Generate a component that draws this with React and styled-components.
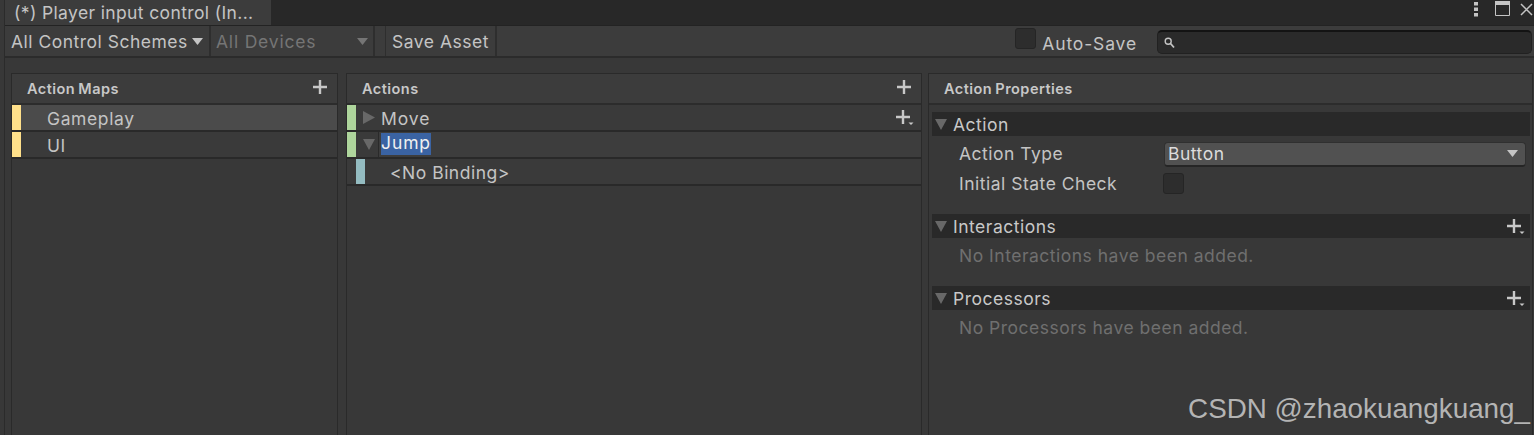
import React from "react";
import styled, { createGlobalStyle } from "styled-components";

const Global = createGlobalStyle`
  html, body { margin: 0; padding: 0; background: #383838; }
  body { font-family: Inter, "Noto Sans", sans-serif; }
  * { box-sizing: border-box; }
`;

const Page = styled.div`
  position: relative;
  width: 1534px;
  height: 435px;
  overflow: hidden;
  padding-left: 4px;
  background: #383838;
  color: #c4c4c4;
  font-size: 17.5px;
  letter-spacing: 0.5px;
  white-space: nowrap;
`;

const Frame = styled.div`
  height: 100%;
  border-left: 1px solid #2b2b2b;
`;

const TabBar = styled.div`
  display: flex;
  align-items: stretch;
  justify-content: space-between;
  height: 26px;
  background: #282828;
  border-bottom: 1px solid #232323;
`;

const Tab = styled.div`
  display: flex;
  align-items: center;
  width: 266px;
  padding-left: 9px;
  background: #3c3c3c;
  letter-spacing: 0.37px;
`;

const WindowIcons = styled.div`
  display: flex;
  align-items: flex-start;
  padding-top: 1px;
  padding-right: 1px;
`;

const Dots = styled.svg`
  margin: 1px 17px 0 0;
`;

const MaxIcon = styled.svg`
  margin-right: 10px;
`;

const CloseIcon = styled.svg`
  margin-top: 2px;
`;

const Toolbar = styled.div`
  display: flex;
  align-items: stretch;
  height: 32px;
  padding-left: 2px;
  background: #3c3c3c;
  border-bottom: 2px solid #2b2b2b;
`;

const ToolItem = styled.div`
  display: flex;
  align-items: center;
  justify-content: space-between;
  width: ${(p) => p.$w}px;
  padding: 0 ${(p) => p.$pr ?? 6}px 0 ${(p) => p.$pl ?? 4}px;
  margin-right: ${(p) => p.$mr ?? 1}px;
  border-right: 2px solid #2e2e2e;
  ${(p) => p.$bl && "border-left: 1px solid #2e2e2e;"}
  color: ${(p) => (p.$off ? "#757575" : "#c4c4c4")};
  ${(p) => p.$off && "letter-spacing: 0.8px;"}
`;

const AutoSave = styled.label`
  display: flex;
  align-items: center;
  gap: 6px;
  margin-left: auto;
  margin-right: 20px;
`;

const AutoSaveText = styled.span`
  padding-top: 4px;
  letter-spacing: 0.85px;
`;

const Check = styled.span`
  display: block;
  width: 21px;
  height: 21px;
  background: #2d2d2d;
  border: 1px solid #252525;
  border-radius: 3px;
  ${(p) => p.$up && "margin-top: -5px;"}
  ${(p) => p.$inset && "margin: 1px 0 0 -1px;"}
`;

const SearchBox = styled.div`
  display: flex;
  align-items: center;
  width: 375px;
  height: 24px;
  margin-top: 4px;
  margin-right: 2px;
  padding-left: 6px;
  background: #2a2a2a;
  border: 1px solid #212121;
  border-top: 2px solid #131313;
  border-radius: 5px;
`;

const Main = styled.div`
  display: grid;
  grid-template-columns: 327px 576px 1fr;
  column-gap: 8px;
  height: 377px;
  padding: 15px 1px 0 6px;
`;

const Panel = styled.section`
  display: flex;
  flex-direction: column;
  min-width: 0;
  border: 1px solid #2a2a2a;
  border-bottom: 0;
  ${(p) => p.$pull && "margin-left: -2px;"}
`;

const PanelHead = styled.header`
  display: flex;
  align-items: center;
  justify-content: space-between;
  flex: none;
  height: 31px;
  padding: 0 6px 0 15px;
  background: #3c3c3c;
  border-bottom: 2px solid #2c2c2c;
  color: #c8c8c8;
  font-size: 14.5px;
  font-weight: 600;
  letter-spacing: 0.47px;
  word-spacing: -1px;
`;

const HeadPlus = styled.span`
  display: flex;
  margin-top: -4px;
`;

const Row = styled.div`
  display: flex;
  align-items: center;
  flex: none;
  height: 27px;
  background: ${(p) => (p.$sel ? "#4b4b4b" : "#3a3a3a")};
  border-bottom: 2px solid #292929;
  padding-left: ${(p) => p.$indent ?? 0}px;
`;

const ColorBar = styled.span`
  flex: none;
  align-self: stretch;
  width: 9px;
  background: ${(p) => p.$c};
`;

const MapName = styled.span`
  margin: 2px 0 0 26px;
  letter-spacing: 0.6px;
`;

const Arrow = styled.svg`
  flex: none;
  width: 12px;
  height: 13px;
  margin-left: 7px;
  margin-right: 5px;
  fill: #686868;
`;

const ActionName = styled.span`
  margin: 2px 0 0 1px;
  letter-spacing: 0.9px;
`;

const JumpField = styled.div`
  display: flex;
  align-items: flex-start;
  flex: 1;
  align-self: stretch;
  margin-left: -2px;
  padding: 1px 0 0 2px;
  background: #3d3d3d;
  border-left: 1px solid #2a2a2a;
`;

const Selected = styled.span`
  height: 22px;
  line-height: 20px;
  background: #3a63a3;
  color: #f0f0f0;
  letter-spacing: 0.9px;
`;

const TrailingPlus = styled.span`
  display: flex;
  margin-left: auto;
  margin-right: ${(p) => p.$mr ?? 5}px;
  margin-top: ${(p) => p.$mt ?? 0}px;
`;

const BindingName = styled.span`
  margin-left: 25px;
  margin-top: 2px;
`;

const Props = styled.div`
  display: flex;
  flex-direction: column;
  padding: 7px 2px 0 3px;
`;

const Section = styled.div`
  display: flex;
  flex-direction: column;
`;

const SectionHead = styled.div`
  display: flex;
  align-items: center;
  height: 24px;
  background: #292929;
  color: #c8c8c8;

  ${Arrow} {
    margin: 0 6px 0 3px;
  }
`;

const PropList = styled.div`
  display: flex;
  flex-direction: column;
  height: 78px;
  padding: 2px 4px 0 27px;
`;

const PropRow = styled.div`
  display: grid;
  grid-template-columns: 205px 1fr;
  align-items: center;
  height: 30px;
`;

const Dropdown = styled.div`
  display: flex;
  align-items: center;
  justify-content: space-between;
  height: 25px;
  margin-top: 2px;
  padding: 0 7px 0 3px;
  background: #515151;
  border: 1px solid #303030;
  border-bottom: 2px solid #252525;
  border-radius: 4px;
  color: #dcdcdc;
`;

const Empty = styled.div`
  height: 48px;
  padding: 7px 0 0 27px;
  line-height: 22px;
  color: #6f6f6f;
`;

const Watermark = styled.div`
  position: absolute;
  right: 4px;
  bottom: 10px;
  font-family: "Liberation Sans", sans-serif;
  font-size: 27.8px;
  letter-spacing: 0;
  color: #b4b4b4;
`;

const Caret = ({ color = "#c4c4c4" }) => (
  <svg width="11" height="7" viewBox="0 0 11 7" style={{ flex: "none" }}>
    <path d="M0 0h11L5.5 7z" fill={color} />
  </svg>
);

const PlusIcon = ({ more }) => (
  <svg width="20" height="18" viewBox="0 0 20 18">
    <path d="M7.8 2h2.4v5.8H16v2.4h-5.8V16H7.8v-5.8H2V7.8h5.8z" fill="#c8c8c8" />
    {more && <path d="M14.5 14.5h5l-2.5 2.5z" fill="#c8c8c8" />}
  </svg>
);

const Down = () => (
  <Arrow viewBox="0 0 12 13"><path d="M0 1h12L6 12z" /></Arrow>
);
const Right = () => (
  <Arrow viewBox="0 0 12 13"><path d="M0 0l12 6.5L0 13z" /></Arrow>
);

export default function App() {
  return (
    <Page>
      <Global />
      <Frame>
        <TabBar>
          <Tab>(*) Player input control (In...</Tab>
          <WindowIcons>
            <Dots width="4" height="15" viewBox="0 0 4 15">
              <rect y="0" width="4" height="3.5" fill="#c4c4c4" />
              <rect y="5.5" width="4" height="3.5" fill="#c4c4c4" />
              <rect y="11" width="4" height="3.5" fill="#c4c4c4" />
            </Dots>
            <MaxIcon width="15" height="15" viewBox="0 0 15 15">
              <path d="M0.5 3.5h14v11h-14z" fill="none" stroke="#c4c4c4" />
              <rect width="15" height="4" fill="#c4c4c4" />
            </MaxIcon>
            <CloseIcon width="13" height="13" viewBox="0 0 13 13">
              <path d="M1 1l11 11M12 1L1 12" stroke="#c4c4c4" strokeWidth="1.5" />
            </CloseIcon>
          </WindowIcons>
        </TabBar>
        <Toolbar>
          <ToolItem $w={204}>All Control Schemes<Caret /></ToolItem>
          <ToolItem $w={163} $off $pr={5} $mr={10}>All Devices<Caret color="#757575" /></ToolItem>
          <ToolItem $w={112} $bl $pl={6}>Save Asset</ToolItem>
          <AutoSave>
            <Check $up />
            <AutoSaveText>Auto-Save</AutoSaveText>
          </AutoSave>
          <SearchBox>
            <svg width="11" height="12" viewBox="0 0 11 12">
              <circle cx="4.2" cy="4.2" r="3" fill="none" stroke="#c4c4c4" strokeWidth="1.4" />
              <path d="M6.5 6.5L10 10.5" stroke="#c4c4c4" strokeWidth="1.8" />
            </svg>
          </SearchBox>
        </Toolbar>
        <Main>
          <Panel>
            <PanelHead>Action Maps<HeadPlus><PlusIcon /></HeadPlus></PanelHead>
            <Row $sel><ColorBar $c="#ffe08a" /><MapName>Gameplay</MapName></Row>
            <Row><ColorBar $c="#ffe08a" /><MapName>UI</MapName></Row>
          </Panel>
          <Panel>
            <PanelHead>Actions<HeadPlus><PlusIcon /></HeadPlus></PanelHead>
            <Row>
              <ColorBar $c="#aed59c" />
              <Right />
              <ActionName>Move</ActionName>
              <TrailingPlus $mr={7} $mt={-2}><PlusIcon more /></TrailingPlus>
            </Row>
            <Row>
              <ColorBar $c="#aed59c" />
              <Down />
              <JumpField><Selected>Jump</Selected></JumpField>
            </Row>
            <Row $indent={9}>
              <ColorBar $c="#94bcc1" />
              <BindingName>&lt;No Binding&gt;</BindingName>
            </Row>
          </Panel>
          <Panel $pull>
            <PanelHead>Action Properties</PanelHead>
            <Props>
              <Section>
                <SectionHead><Down />Action</SectionHead>
                <PropList>
                  <PropRow>
                    <span>Action Type</span>
                    <Dropdown>Button<Caret /></Dropdown>
                  </PropRow>
                  <PropRow>
                    <span>Initial State Check</span>
                    <Check $inset />
                  </PropRow>
                </PropList>
              </Section>
              <Section>
                <SectionHead><Down />Interactions<TrailingPlus><PlusIcon more /></TrailingPlus></SectionHead>
                <Empty>No Interactions have been added.</Empty>
              </Section>
              <Section>
                <SectionHead><Down />Processors<TrailingPlus><PlusIcon more /></TrailingPlus></SectionHead>
                <Empty>No Processors have been added.</Empty>
              </Section>
            </Props>
          </Panel>
        </Main>
      </Frame>
      <Watermark>CSDN @zhaokuangkuang_</Watermark>
    </Page>
  );
}
